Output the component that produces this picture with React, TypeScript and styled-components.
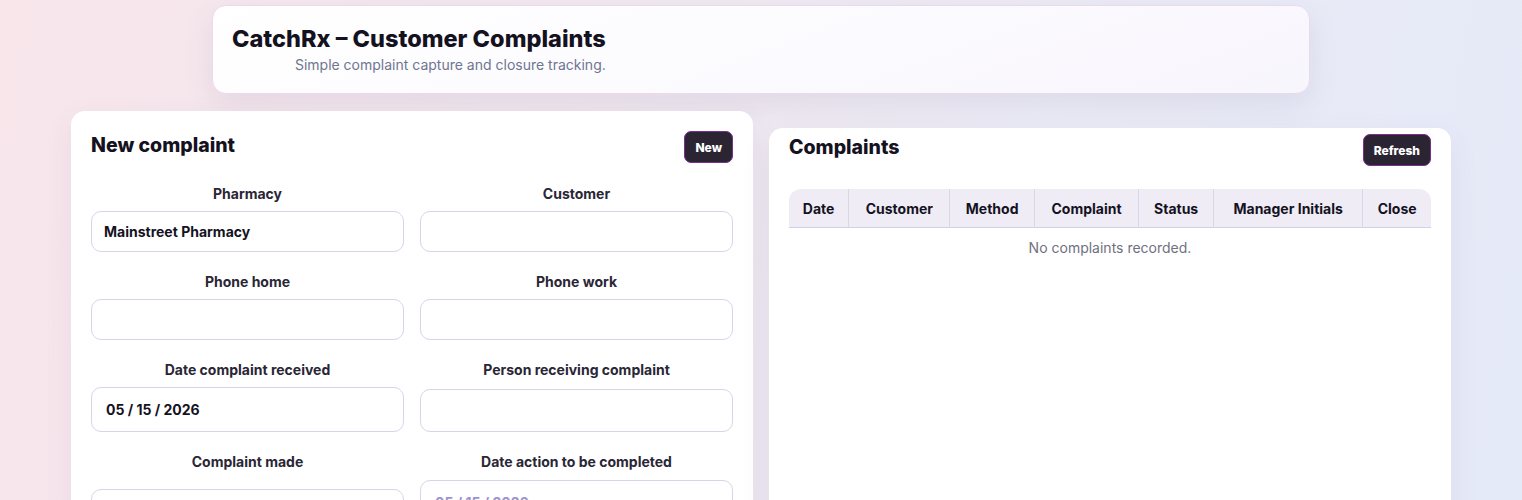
import React from "react";
import styled, { createGlobalStyle } from "styled-components";

const Global = createGlobalStyle`
  html, body { margin: 0; padding: 0; }
  body {
    font-family: "Inter", "Noto Sans", sans-serif;
    background: linear-gradient(100deg, #f8e6eb 0%, #f1e9f0 40%, #ebebf5 65%, #e5eaf8 100%);
    min-height: 500px;
    color: #15121f;
  }
`;

const Page = styled.div`
  padding: 5px 71px 0;
  display: flex;
  flex-direction: column;
  align-items: center;
  gap: 17px;
`;

const Header = styled.header`
  box-sizing: border-box;
  width: 1098px;
  height: 89px;
  border-radius: 14px;
  border: 1px solid #ecd9ee;
  background: linear-gradient(160deg, #ffffff 0%, #f8f6fd 100%);
  box-shadow: 0 10px 30px rgba(90, 70, 130, 0.1);
  padding: 19px 20px 0 19px;
`;

const TitleBlock = styled.div`
  display: inline-flex;
  flex-direction: column;
  align-items: flex-end;
`;

const Title = styled.h1`
  margin: 0;
  font-size: 23.5px;
  font-weight: 800;
  letter-spacing: 0;
  line-height: 28px;
  color: #15121f;
`;

const Subtitle = styled.p`
  margin: 3px 0 0;
  font-size: 14px;
  color: #6e7690;
  line-height: 17px;
`;

const Columns = styled.div`
  width: 100%;
  display: grid;
  grid-template-columns: 1fr 1fr;
  gap: 16px;
  align-items: start;
`;

const Card = styled.section<{ $offset?: number; $pt: number }>`
  box-sizing: border-box;
  background: #ffffff;
  border-radius: 14px;
  box-shadow: 0 10px 30px rgba(90, 70, 130, 0.08);
  padding: ${(p) => p.$pt}px 20px 20px;
  margin-top: ${(p) => p.$offset ?? 0}px;
  min-height: 420px;
`;

const CardHead = styled.div<{ $mb: number }>`
  display: flex;
  justify-content: space-between;
  align-items: center;
  margin-bottom: ${(p) => p.$mb}px;
`;

const CardTitle = styled.h2<{ $shift?: number }>`
  margin: 0;
  font-size: 19.5px;
  font-weight: 800;
  color: #15121f;
  letter-spacing: 0;
  position: relative;
  top: ${(p) => p.$shift ?? 0}px;
`;

const DarkButton = styled.button`
  height: 32px;
  padding: 0 10px;
  background: #2b2533;
  border: 1px solid #7b2e8d;
  border-radius: 7px;
  color: #ffffff;
  font-family: inherit;
  font-size: 12px;
  font-weight: 800;
  cursor: pointer;
`;

const FormGrid = styled.div`
  display: grid;
  grid-template-columns: 1fr 1fr;
  column-gap: 16px;
  row-gap: 22px;
  align-items: start;
`;

const Field = styled.label<{ $gap: number }>`
  display: flex;
  flex-direction: column;
  gap: ${(p) => p.$gap}px;
`;

const LabelText = styled.span`
  text-align: center;
  font-size: 14px;
  font-weight: 700;
  color: #2a2635;
  line-height: 16px;
`;

const Input = styled.input<{ $h: number; $muted?: boolean; $pad?: number }>`
  box-sizing: border-box;
  width: 100%;
  height: ${(p) => p.$h}px;
  border: 1px solid #d9d4ea;
  border-radius: 10px;
  background: #ffffff;
  padding: 0 ${(p) => p.$pad ?? 12}px;
  font-family: inherit;
  font-size: 14px;
  font-weight: 700;
  color: ${(p) => (p.$muted ? "#9c92cf" : "#15121f")};
  outline: none;
`;

const TableWrap = styled.div`
  border-radius: 12px 12px 0 0;
  overflow: hidden;
`;

const Table = styled.table`
  width: 100%;
  border-collapse: collapse;
`;

const Th = styled.th`
  background: #efecf6;
  height: 38px;
  padding: 0 10px;
  font-size: 14px;
  font-weight: 700;
  color: #15121f;
  border-bottom: 1px solid #d6d0e6;
  border-left: 1px solid #dcd6ea;
  white-space: nowrap;
  &:first-child { border-left: none; }
`;

const EmptyCell = styled.td`
  text-align: center;
  font-size: 14px;
  color: #6f7180;
  height: 36px;
`;

const cols = ["Date", "Customer", "Method", "Complaint", "Status", "Manager Initials", "Close"];

export default function App() {
  return (
    <>
      <Global />
      <Page>
        <Header>
          <TitleBlock>
            <Title>CatchRx – Customer Complaints</Title>
            <Subtitle>Simple complaint capture and closure tracking.</Subtitle>
          </TitleBlock>
        </Header>
        <Columns>
          <Card $pt={20}>
            <CardHead $mb={23}>
              <CardTitle $shift={-2}>New complaint</CardTitle>
              <DarkButton>New</DarkButton>
            </CardHead>
            <FormGrid>
              <Field $gap={9}>
                <LabelText>Pharmacy</LabelText>
                <Input $h={41} defaultValue="Mainstreet Pharmacy" />
              </Field>
              <Field $gap={9}>
                <LabelText>Customer</LabelText>
                <Input $h={41} />
              </Field>
              <Field $gap={9}>
                <LabelText>Phone home</LabelText>
                <Input $h={41} />
              </Field>
              <Field $gap={9}>
                <LabelText>Phone work</LabelText>
                <Input $h={41} />
              </Field>
              <Field $gap={9}>
                <LabelText>Date complaint received</LabelText>
                <Input $h={45} $pad={14} defaultValue="05 / 15 / 2026" />
              </Field>
              <Field $gap={11}>
                <LabelText>Person receiving complaint</LabelText>
                <Input $h={43} />
              </Field>
              <Field $gap={19}>
                <LabelText>Complaint made</LabelText>
                <Input $h={45} />
              </Field>
              <Field $gap={10}>
                <LabelText>Date action to be completed</LabelText>
                <Input $h={45} $pad={14} $muted defaultValue="05 / 15 / 2026" />
              </Field>
            </FormGrid>
          </Card>
          <Card $offset={17} $pt={6}>
            <CardHead $mb={23}>
              <CardTitle $shift={-3}>Complaints</CardTitle>
              <DarkButton>Refresh</DarkButton>
            </CardHead>
            <TableWrap>
              <Table>
                <thead>
                  <tr>
                    {cols.map((c) => (
                      <Th key={c}>{c}</Th>
                    ))}
                  </tr>
                </thead>
                <tbody>
                  <tr>
                    <EmptyCell colSpan={7}>No complaints recorded.</EmptyCell>
                  </tr>
                </tbody>
              </Table>
            </TableWrap>
          </Card>
        </Columns>
      </Page>
    </>
  );
}
